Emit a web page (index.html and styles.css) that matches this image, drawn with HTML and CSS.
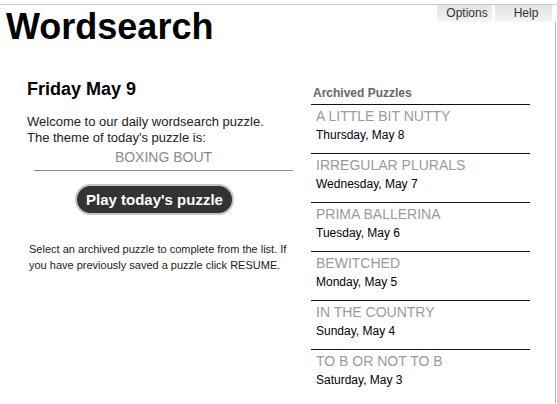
FILE: index.html
```html
<!DOCTYPE html>
<html>
<head>
<meta charset="utf-8">
<title>Wordsearch</title>
<link rel="stylesheet" href="styles.css">
</head>
<body>
<div class="page">
  <header class="header">
    <h1 class="title">Wordsearch</h1>
    <nav class="tabs">
      <span class="tab tab-options">Options</span>
      <span class="tab tab-help">Help</span>
    </nav>
  </header>
  <main class="main">
    <section class="today">
      <h2 class="today-date">Friday May 9</h2>
      <p class="welcome">Welcome to our daily wordsearch puzzle.<br>The theme of today's puzzle is:</p>
      <div class="theme">BOXING BOUT</div>
      <button class="play">Play today's puzzle</button>
      <p class="hint">Select an archived puzzle to complete from the list. If you have previously saved a puzzle click RESUME.</p>
    </section>
    <section class="archive">
      <h3 class="archive-head">Archived Puzzles</h3>
      <ul class="archive-list">
        <li class="item"><div class="item-title">A LITTLE BIT NUTTY</div><div class="item-date">Thursday, May 8</div></li>
        <li class="item"><div class="item-title">IRREGULAR PLURALS</div><div class="item-date">Wednesday, May 7</div></li>
        <li class="item"><div class="item-title">PRIMA BALLERINA</div><div class="item-date">Tuesday, May 6</div></li>
        <li class="item"><div class="item-title">BEWITCHED</div><div class="item-date">Monday, May 5</div></li>
        <li class="item"><div class="item-title">IN THE COUNTRY</div><div class="item-date">Sunday, May 4</div></li>
        <li class="item"><div class="item-title">TO B OR NOT TO B</div><div class="item-date">Saturday, May 3</div></li>
      </ul>
    </section>
  </main>
</div>
</body>
</html>
```
FILE: styles.css
```css
html, body {
  margin: 0;
  padding: 0;
  background: #fff;
}
body {
  font-family: "Liberation Sans", Arial, sans-serif;
  color: #000;
}
.page {
  margin-top: 4px;
  border-top: 1px solid #c8c8c8;
  width: 557px;
  height: 399px;
  box-sizing: border-box;
  background: linear-gradient(#b8b8b8, #b8b8b8) no-repeat;
  background-position: 555px 17px;
  background-size: 1px 100%;
}
.header {
  display: flex;
  justify-content: space-between;
  align-items: flex-start;
}
.title {
  margin: 4px 0 0 0;
  padding-left: 6px;
  font-size: 36px;
  line-height: 36px;
  font-weight: bold;
}
.tabs {
  display: flex;
  gap: 3px;
  margin-right: 5px;
}
.tab {
  display: block;
  height: 17px;
  line-height: 17px;
  font-size: 12px;
  color: #333;
  text-align: center;
  background: linear-gradient(#e4e4e4, #eeeeee 70%, #f7f7f7);
  box-sizing: border-box;
  padding-left: 5px;
}
.tab-options { width: 55px; }
.tab-help { width: 57px; }

.main {
  display: grid;
  grid-template-columns: 266px 219px;
  column-gap: 18px;
  padding-left: 27px;
}
.today-date {
  margin: 33px 0 0 0;
  font-size: 18px;
  line-height: 22px;
  font-weight: bold;
}
.welcome {
  margin: 14px 0 0 0;
  font-size: 13px;
  line-height: 16px;
  color: #222;
}
.theme {
  margin: 3px 0 0 7px;
  font-size: 14px;
  line-height: 17px;
  color: #8a8a8a;
  text-align: center;
  padding-bottom: 4px;
  border-bottom: 1px solid #8c8c8c;
}
.play {
  display: block;
  margin: 13px 0 0 48px;
  height: 31px;
  padding: 0 9px;
  border: 2px solid #c4c4c4;
  border-radius: 16px;
  background: #333;
  color: #fff;
  font-family: "Liberation Sans", Arial, sans-serif;
  font-size: 15px;
  line-height: 27px;
  font-weight: bold;
}
.hint {
  margin: 26px 0 0 2px;
  font-size: 11px;
  line-height: 16px;
  color: #222;
}
.archive-head {
  margin: 41px 0 4px 2px;
  font-size: 12px;
  line-height: 14px;
  font-weight: bold;
  color: #666;
}
.archive-list {
  list-style: none;
  margin: 0;
  padding: 0;
}
.item {
  border-top: 1px solid #111;
  padding: 2px 0 10px 5px;
}
.item-title {
  font-size: 14px;
  line-height: 18px;
  color: #9a9a9a;
}
.item-date {
  margin-top: 2px;
  font-size: 12px;
  line-height: 16px;
  color: #000;
}
```
